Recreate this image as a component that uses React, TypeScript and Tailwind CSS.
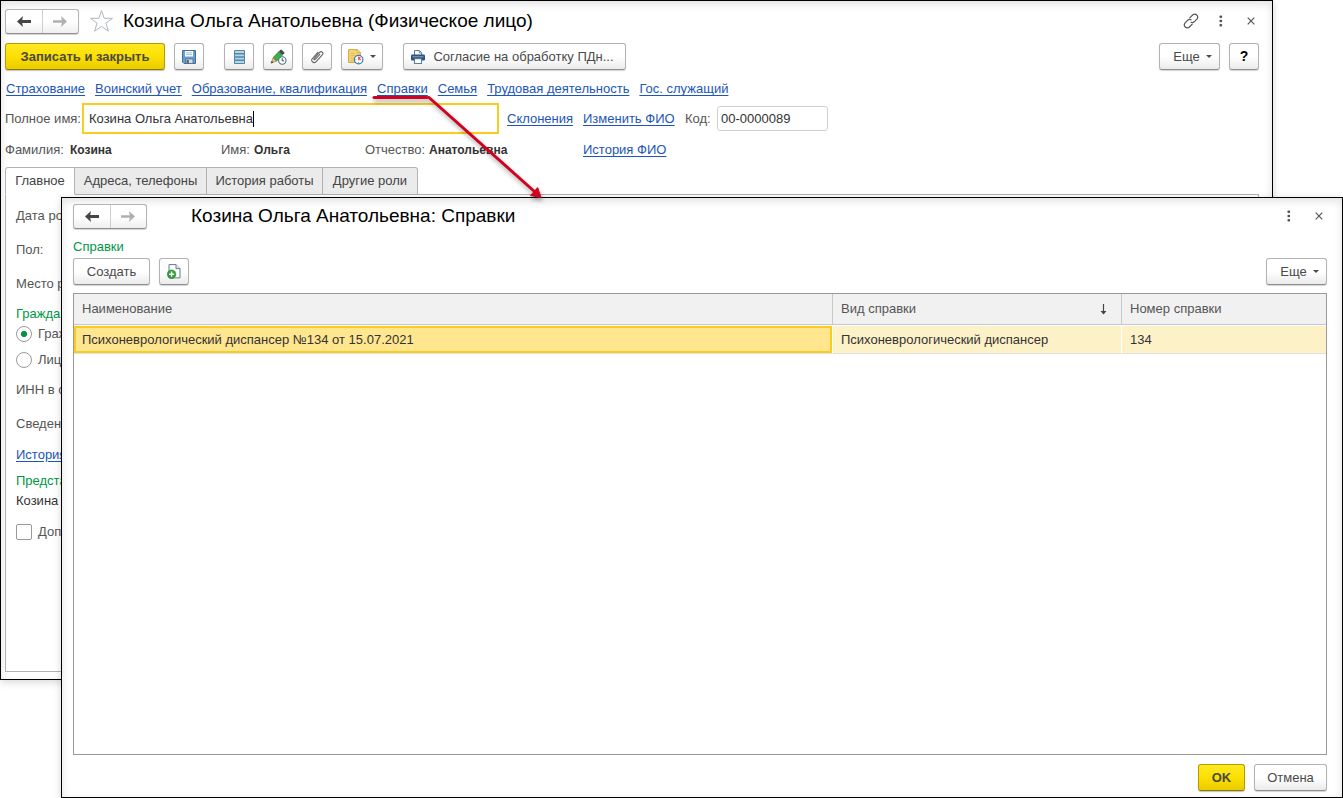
import React from "react";

const buttonBase =
  "flex h-[27px] shrink-0 items-center justify-center rounded-[3px] border border-[#b3b3b3] border-b-[#8f8f8f] bg-linear-to-b from-white from-50% to-[#ebebeb] shadow-[0_1px_1px_rgba(0,0,0,0.18)] whitespace-nowrap text-[#4a4a4a]";
const yellowButton =
  "flex h-[27px] shrink-0 items-center justify-center rounded-[3px] border border-[#b39b00] border-b-[#8f7c00] bg-linear-to-b from-[#ffe81f] via-[#fce000] to-[#e9cb00] shadow-[0_1px_1px_rgba(0,0,0,0.25)] whitespace-nowrap font-bold text-[#4a4a3c]";
const linkStyle = "whitespace-nowrap text-[#1d55b8] underline underline-offset-2";
const windowFrame =
  "absolute flex flex-col border border-black bg-white shadow-[0_2px_8px_rgba(0,0,0,0.16)]";

function Caret() {
  return (
    <svg width="6" height="3" viewBox="0 0 6 3" aria-hidden="true">
      <path d="M0 0h6L3 3z" fill="#4a4a4a" />
    </svg>
  );
}

function ArrowLeft() {
  return (
    <svg width="14" height="11" viewBox="0 0 14 11" aria-hidden="true">
      <path d="M0 5.500 6 0 5.200 4H14v3H5.200L6 11z" fill="#454545" />
    </svg>
  );
}

function ArrowRight() {
  return (
    <svg width="14" height="11" viewBox="0 0 14 11" aria-hidden="true">
      <path d="M14 5.500 8 0 8.800 4.300H0v2.400h8.800L8 11z" fill="#b0b0b0" />
    </svg>
  );
}

function NavButtons() {
  return (
    <div className="flex h-[25px] w-[74px] shrink-0 rounded-[3px] border border-[#b3b3b3] border-b-[#8f8f8f] bg-linear-to-b from-white from-50% to-[#efefef] shadow-[0_1px_1px_rgba(0,0,0,0.18)]">
      <button type="button" aria-label="Назад" className="flex flex-1 items-center justify-center border-r border-[#cfcfcf]">
        <ArrowLeft />
      </button>
      <button type="button" aria-label="Вперед" className="flex flex-1 items-center justify-center">
        <ArrowRight />
      </button>
    </div>
  );
}

function Dots() {
  return (
    <button type="button" aria-label="Меню" className="flex h-6 w-[30px] items-center justify-center">
      <svg width="4" height="12" viewBox="0 0 4 12" aria-hidden="true" fill="#555">
        <rect x="0.5" y="0.5" width="2.6" height="2.6" rx="0.8" />
        <rect x="0.5" y="4.7" width="2.6" height="2.6" rx="0.8" />
        <rect x="0.5" y="8.9" width="2.6" height="2.6" rx="0.8" />
      </svg>
    </button>
  );
}

function Close() {
  return (
    <button type="button" aria-label="Закрыть" className="flex h-6 w-[30px] items-center justify-center">
      <svg width="8" height="8" viewBox="0 0 8 8" aria-hidden="true">
        <path d="M0.7 0.7l6.6 6.6M7.3 0.7L0.7 7.3" stroke="#555" strokeWidth="1.2" />
      </svg>
    </button>
  );
}

function MoreButton() {
  return (
    <button type="button" className={buttonBase + " w-[61px] gap-1.5 pl-1.5"}>
      Еще <Caret />
    </button>
  );
}

function FloppyIcon() {
  return (
    <svg width="14" height="14" viewBox="0 0 14 14" aria-hidden="true">
      <path d="M.5.5h13v13H2L.5 12z" fill="#6c9dcd" stroke="#3f6ea1" />
      <rect x="3" y="1" width="8" height="5.5" fill="#fff" />
      <path d="M4 2.8h6M4 4.6h6" stroke="#8fa9c4" strokeWidth=".8" />
      <rect x="3.5" y="9" width="7.5" height="4.5" fill="#d5dbe1" stroke="#40617f" strokeWidth=".7" />
      <rect x="4.5" y="10" width="2.3" height="3.3" fill="#3e6385" />
    </svg>
  );
}

function ListIcon() {
  return (
    <svg width="11" height="14" viewBox="0 0 11 14" aria-hidden="true">
      <rect width="11" height="14" rx=".8" fill="#5487a8" />
      <path d="M1 2h9M1 5.300h9M1 8.600h9M1 12h9" stroke="#b5d6e8" strokeWidth="1.800" />
    </svg>
  );
}

function PencilClockIcon() {
  return (
    <svg width="17" height="16" viewBox="0 0 17 16" aria-hidden="true">
      <path d="M1 14.2 3.2 8.6 6.7 12z" fill="#e8bf86" stroke="#8d6b46" strokeWidth=".6" />
      <path d="M1 14.2l.8-2.2 1.4 1.4z" fill="#333" />
      <path d="M3.2 8.6 8.8 2.6 12.4 6.1 6.7 12z" fill="#3fae49" stroke="#24762d" strokeWidth=".7" />
      <path d="M8.8 2.6 10.6.8Q11.2.4 11.8.9l2.4 2.3q.5.6 0 1.2L12.4 6.1z" fill="#3d4e57" />
      <circle cx="12.3" cy="11.5" r="3.7" fill="#fff" stroke="#456f92" strokeWidth="1.1" />
      <path d="M12.2 9.3v2.5H14" fill="none" stroke="#345" strokeWidth="1" />
    </svg>
  );
}

function ClipIcon() {
  return (
    <svg width="14" height="14" viewBox="0 0 14 14" aria-hidden="true">
      <path
        d="M9.800 4.400 5.300 9.300c-.8.900-1.900-.1-1.100-1l5.300-5.900c1.900-1.900 4.500.4 2.800 2.400l-6.100 6.800c-2.400 2.400-5.900-.4-3.800-3.100L7.900 2.300"
        fill="none"
        stroke="#666"
        strokeWidth="1.1"
        strokeLinecap="round"
      />
    </svg>
  );
}

function NoteClockIcon() {
  return (
    <svg width="16" height="16" viewBox="0 0 16 16" aria-hidden="true">
      <path d="M.6.6h8.6l3.2 3.2v9.7H.6z" fill="#f7d774" stroke="#c99f37" strokeWidth=".9" />
      <path d="M9.2.6v3.2h3.2z" fill="#fff0b8" stroke="#c99f37" strokeWidth=".7" />
      <path d="M2.5 4.3h4M2.5 6.7h5M2.5 9.1h3M2.5 11.5h2.5" stroke="#d8b760" />
      <circle cx="10.6" cy="10.6" r="4.3" fill="#fff" stroke="#3f79b1" strokeWidth="1.2" />
      <path d="M10.6 10.6V7.700l2.500 1z" fill="#e04848" />
      <path d="M10.6 7.700v3h2.500" fill="none" stroke="#c43737" strokeWidth=".8" />
      <path d="M7.500 10.600h.9M10.600 12.900v.9" stroke="#3f79b1" />
    </svg>
  );
}

function PrinterIcon() {
  return (
    <svg width="14" height="14" viewBox="0 0 14 14" aria-hidden="true">
      <path d="M3.500 5V.6h5l2.100 2.100V5" fill="#fff" stroke="#44698d" strokeWidth=".9" />
      <path d="M8.300.7v2.200h2.200" fill="none" stroke="#44698d" strokeWidth=".7" />
      <rect y="4.600" width="14" height="6" rx="1.300" fill="#2f5479" />
      <path d="M1.500 6.800h11" stroke="#8fb0cc" strokeWidth=".9" />
      <rect x="3.400" y="8.700" width="7.200" height="4.700" fill="#fff" stroke="#44698d" strokeWidth=".9" />
    </svg>
  );
}

function LinkIcon() {
  return (
    <svg width="16" height="16" viewBox="0 0 16 16" aria-hidden="true" fill="none" stroke="#555" strokeWidth="1.200" strokeLinecap="round">
      <path d="M6.800 4.800 9.600 2c2.900-2.500 6.700 1 4.300 4.100l-2.700 2.700C10.300 9.600 9 9.700 8 9.200" />
      <path d="M9.200 11.200 6.400 14c-2.900 2.500-6.700-1-4.300-4.100l2.700-2.700C5.700 6.400 7 6.300 8 6.800" />
    </svg>
  );
}

function NewDocIcon() {
  return (
    <svg width="14" height="15" viewBox="0 0 14 15" aria-hidden="true">
      <path d="M2 .6h7l4 4v9.300H2z" fill="#fff" stroke="#65798b" />
      <path d="M9 .6v4h4" fill="#e7edf2" stroke="#65798b" />
      <circle cx="4.600" cy="10.200" r="4.300" fill="#2f9c35" stroke="#1e7d27" strokeWidth=".5" />
      <path d="M4.600 7.600v5.200M2 10.200h5.200" stroke="#fff" strokeWidth="1.500" />
    </svg>
  );
}

const sections = [
  "Страхование",
  "Воинский учет",
  "Образование, квалификация",
  "Справки",
  "Семья",
  "Трудовая деятельность",
  "Гос. служащий",
];

function PersonWindow() {
  return (
    <section className={windowFrame + " top-0 right-[70px] bottom-[118px] left-0"}>
      <div className="flex flex-1 flex-col pt-2 pr-[13px] pb-[7px] pl-1 shadow-[inset_0_3px_8px_rgba(0,0,0,0.12)]">
        <header className="flex h-6 items-center">
          <NavButtons />
          <button type="button" aria-label="В избранное" className="ml-2.5 shrink-0">
            <svg width="25" height="24" viewBox="0 0 25 24" aria-hidden="true">
              <path d="M12.500 1.500l2.700 7.800h8.300l-6.600 4.900 2.500 8-6.900-4.800-6.900 4.800 2.500-8L1.500 9.300h8.300z" fill="#fff" stroke="#b0b6ba" />
            </svg>
          </button>
          <h1 className="ml-[9px] flex-1 text-[19px] whitespace-nowrap text-black">Козина Ольга Анатольевна (Физическое лицо)</h1>
          <button type="button" aria-label="Ссылка" className="flex h-6 w-[30px] items-center justify-center">
            <LinkIcon />
          </button>
          <Dots />
          <div className="-mr-[7px]">
            <Close />
          </div>
        </header>

        <div className="mt-2.5 flex gap-[9px]">
          <button type="button" className={yellowButton + " w-40"}>Записать и закрыть</button>
          <button type="button" aria-label="Записать" className={buttonBase + " mr-[11px] w-[30px]"}><FloppyIcon /></button>
          <button type="button" aria-label="Список" className={buttonBase + " w-[30px]"}><ListIcon /></button>
          <button type="button" aria-label="История изменений" className={buttonBase + " w-[30px]"}><PencilClockIcon /></button>
          <button type="button" aria-label="Файлы" className={buttonBase + " w-[30px]"}><ClipIcon /></button>
          <button type="button" aria-label="Напоминание" className={buttonBase + " mr-[11px] w-[42px] gap-1.5"}><NoteClockIcon /><Caret /></button>
          <button type="button" className={buttonBase + " w-[223px] gap-2 pr-1"}><PrinterIcon />Согласие на обработку ПДн...</button>
          <div className="flex-1" />
          <MoreButton />
          <button type="button" aria-label="Справка" className={buttonBase + " w-[30px] text-[14px] font-bold text-black"}>?</button>
        </div>

        <nav className="mt-[11px] flex h-4 items-center gap-2.5 pl-px">
          {sections.map((s) => (
            <a key={s} href="#" className={linkStyle}>{s}</a>
          ))}
        </nav>

        <div className="mt-1.5 flex h-[31px] items-center">
          <label htmlFor="full-name" className="w-[77px] whitespace-nowrap">Полное имя:</label>
          <div className="relative">
            <input
              id="full-name"
              defaultValue="Козина Ольга Анатольевна"
              className="block h-[31px] w-[417px] border-2 border-[#fbcb1e] bg-white px-[5px] text-[#333] outline-none"
            />
            <span className="pointer-events-none absolute top-2 left-[171px] h-4 w-px bg-black" aria-hidden="true" />
          </div>
          <a href="#" className={linkStyle + " ml-2 w-[76px]"}>Склонения</a>
          <a href="#" className={linkStyle + " w-[102px]"}>Изменить ФИО</a>
          <label htmlFor="code" className="w-8">Код:</label>
          <input id="code" defaultValue="00-0000089" className="h-[25px] w-[111px] rounded-[3px] border border-[#cfcfcf] px-[3px] text-[#333] outline-none" />
        </div>

        <div className="mt-2 flex h-4 items-center whitespace-nowrap">
          <span className="w-[65px]">Фамилия:</span>
          <b className="w-[151px] text-[12px] text-[#333]">Козина</b>
          <span className="w-[33px]">Имя:</span>
          <b className="w-[111px] text-[12px] text-[#333]">Ольга</b>
          <span className="w-16">Отчество:</span>
          <b className="w-[154px] text-[12px] text-[#333]">Анатольевна</b>
          <a href="#" className={linkStyle}>История ФИО</a>
        </div>

        <div role="tablist" className="mt-[9px] flex h-7 text-[#444]">
          <button type="button" role="tab" aria-selected="true" className="w-[70px] rounded-tl-[3px] border border-[#b3b3b3] border-b-white bg-white">Главное</button>
          <button type="button" role="tab" aria-selected="false" className="w-[132px] border-y border-r border-[#b3b3b3] bg-[#ebebeb]">Адреса, телефоны</button>
          <button type="button" role="tab" aria-selected="false" className="w-[116px] border-y border-r border-[#b3b3b3] bg-[#ebebeb]">История работы</button>
          <button type="button" role="tab" aria-selected="false" className="w-[95px] rounded-tr-[3px] border-y border-r border-[#b3b3b3] bg-[#ebebeb]">Другие роли</button>
          <div className="flex-1 border-b border-[#b3b3b3]" />
        </div>

        <div className="flex-1 border border-t-0 border-[#b3b3b3] pt-[13px] pl-2.5 leading-4 whitespace-nowrap">
          <div>Дата ро</div>
          <div className="mt-[18px]">Пол:</div>
          <div className="mt-[18px]">Место р</div>
          <div className="mt-3.5 text-[#009646]">Гражда</div>
          <label className="mt-1 flex items-center gap-1.5">
            <input type="radio" name="citizenship" defaultChecked className="size-4 appearance-none rounded-full border border-[#999] bg-white bg-radial from-[#009646] from-28% to-white to-36%" />
            Граж
          </label>
          <label className="mt-2.5 flex items-center gap-1.5">
            <input type="radio" name="citizenship" className="size-4 appearance-none rounded-full border border-[#999] bg-white" />
            Лиц
          </label>
          <div className="mt-3.5">ИНН в с</div>
          <div className="mt-[18px]">Сведен</div>
          <div className="mt-[15px]"><a href="#" className={linkStyle}>История</a></div>
          <div className="mt-2.5 text-[#009646]">Предста</div>
          <div className="mt-1 text-[#333]">Козина</div>
          <label className="mt-[15px] flex items-center gap-1.5">
            <input type="checkbox" className="size-4 appearance-none rounded-[2px] border border-[#999] bg-white" />
            Доп
          </label>
        </div>
      </div>
    </section>
  );
}

function ReferencesWindow() {
  return (
    <section className={windowFrame + " top-[197px] right-0 bottom-0 left-[61px]"}>
      <div className="flex flex-1 flex-col pt-1.5 pr-[15px] pb-1.5 pl-[11px] shadow-[inset_0_3px_8px_rgba(0,0,0,0.12)]">
        <header className="flex h-6 items-center">
          <NavButtons />
          <h2 className="ml-11 flex-1 text-[19px] whitespace-nowrap text-black">Козина Ольга Анатольевна: Справки</h2>
          <Dots />
          <div className="-mr-[7px]">
            <Close />
          </div>
        </header>
        <div className="mt-[11px] h-4 leading-4 text-[#009646]">Справки</div>
        <div className="mt-[3px] flex gap-[9px]">
          <button type="button" className={buttonBase + " w-[77px]"}>Создать</button>
          <button type="button" aria-label="Создать из файла" className={buttonBase + " w-[30px]"}><NewDocIcon /></button>
          <div className="flex-1" />
          <MoreButton />
        </div>
        <div className="mt-2 flex-1 border border-[#999] bg-white">
          <table className="w-full table-fixed border-separate border-spacing-0 text-left leading-4">
            <colgroup>
              <col className="w-[759px]" />
              <col className="w-[289px]" />
              <col />
            </colgroup>
            <thead>
              <tr className="h-[31px] bg-[#f1f1f1]">
                <th className="border-r border-b border-[#c8c8c8] px-2 font-normal">Наименование</th>
                <th className="border-r border-b border-[#c8c8c8] px-2 font-normal">
                  <div className="flex items-center justify-between pr-1.5">
                    Вид справки
                    <svg width="7" height="11" viewBox="0 0 7 11" aria-hidden="true">
                      <path d="M3.500 0v9.500" stroke="#444" strokeWidth="1.200" />
                      <path d="M.5 7l3 3.500 3-3.500z" fill="#444" />
                    </svg>
                  </div>
                </th>
                <th className="border-b border-[#c8c8c8] px-2 font-normal">Номер справки</th>
              </tr>
            </thead>
            <tbody>
              <tr className="h-[29px] text-[#333]">
                <td className="border-y border-r border-t-white border-r-white border-b-[#e0e0e0] bg-[#ffe68f] px-2 shadow-[inset_0_0_0_2px_#fbcb1e]">Психоневрологический диспансер №134 от 15.07.2021</td>
                <td className="border-y border-r border-t-white border-r-white border-b-[#e0e0e0] bg-[#fdf1c7] px-2">Психоневрологический диспансер</td>
                <td className="border-y border-t-white border-b-[#e0e0e0] bg-[#fdf1c7] px-2">134</td>
              </tr>
            </tbody>
          </table>
        </div>
        <footer className="mt-[9px] flex justify-end gap-[9px]">
          <button type="button" className={yellowButton + " w-[47px]"}>OK</button>
          <button type="button" className={buttonBase + " w-[73px]"}>Отмена</button>
        </footer>
      </div>
    </section>
  );
}

export default function App() {
  return (
    <main className="relative h-screen min-h-[700px] overflow-hidden bg-white font-['Liberation_Sans',Arial,sans-serif] text-[13px] text-[#555]">
      <PersonWindow />
      <ReferencesWindow />
      <svg className="pointer-events-none absolute top-[90px] left-[368px] drop-shadow-[1px_3px_2px_rgba(0,0,0,0.35)]" width="180" height="112" viewBox="0 0 180 112" aria-hidden="true">
        <path d="M6 7.500h53" stroke="#d0021f" strokeWidth="3" strokeLinecap="round" />
        <path d="M61 7.500L167 102" stroke="#d0021f" strokeWidth="3" strokeLinecap="round" />
        <path d="M173 107.500l-10.500-2 7.200-8z" fill="#d0021f" stroke="#d0021f" />
      </svg>
    </main>
  );
}
